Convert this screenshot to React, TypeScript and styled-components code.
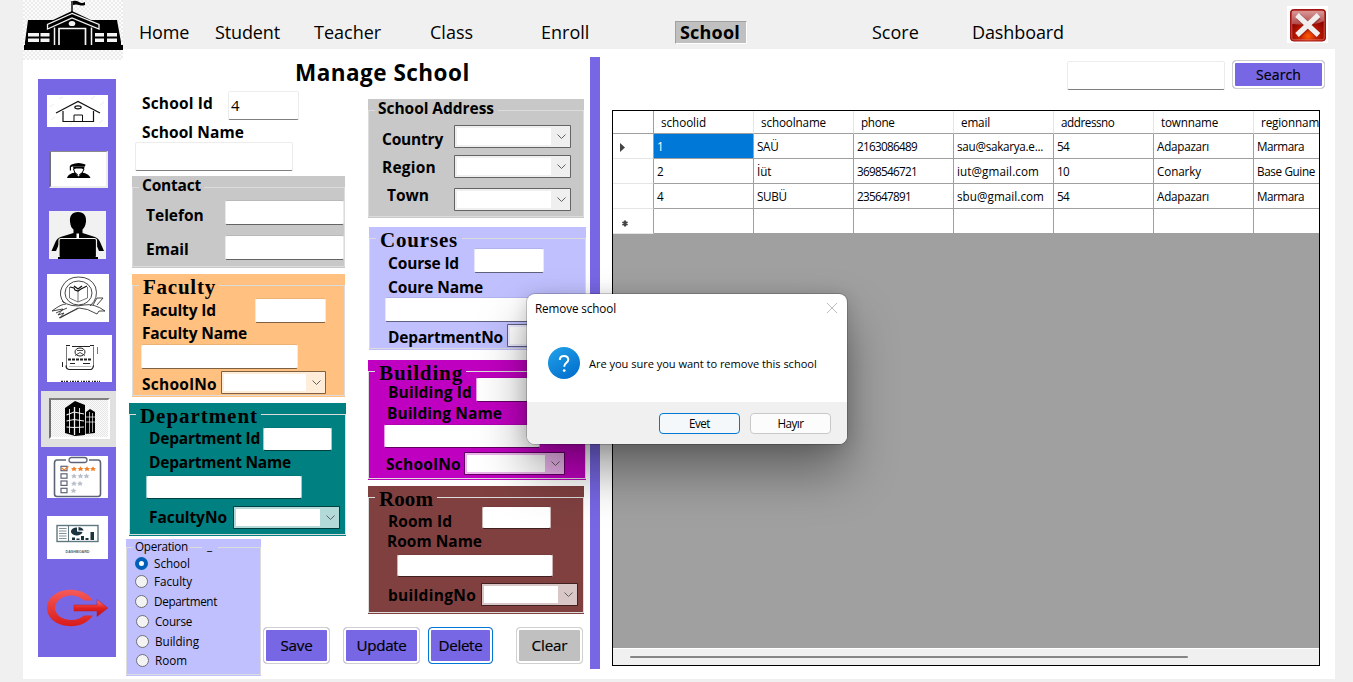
import React from 'react';
import styled, { createGlobalStyle, css } from 'styled-components';

const VIOLET = '#7767e4';

const GlobalStyle = createGlobalStyle`
  *, *::before { box-sizing: border-box; }
  body {
    margin: 0;
    background: #f0f0f0;
    color: #000;
    font-family: "Open Sans", "Noto Sans", sans-serif;
    overflow: hidden;
  }
`;

const Window = styled.div`
  position: relative;
  width: 1353px;
  height: 682px;
  padding: 0 18px 0 23px;
  background: #f0f0f0;
  overflow: hidden;
`;

/* ---------- top bar ---------- */

const TopBar = styled.header`
  display: flex;
  align-items: flex-start;
  height: 49px;
`;

const Logo = styled.div`
  position: relative;
  z-index: 1;
  flex: none;
  width: 100px;
  height: 60px;
  background: repeating-conic-gradient(#ececec 0 25%, #fcfcfc 0 50%) 0 0 / 4px 4px;
  svg { display: block; }
`;

const Nav = styled.nav`
  display: flex;
  margin-top: 20px;
`;

const NavItem = styled.a<{ $gap: number; $w: number; $ls?: number; $active?: boolean }>`
  flex: none;
  width: ${p => p.$w}px;
  height: 24px;
  margin-left: ${p => p.$gap}px;
  font-size: 18px;
  line-height: 25px;
  letter-spacing: ${p => p.$ls ?? 0}px;
  white-space: nowrap;
  ${p => p.$active && css`
    height: 23px;
    margin-top: 1px;
    padding-left: 4px;
    line-height: 21px;
    font-weight: 700;
    background: #c0c0c0;
    border: 1px solid #a0a0a0;
    border-right-color: #fff;
    border-bottom-color: #fff;
  `}
`;

const CloseBox = styled.button`
  flex: none;
  width: 41px;
  height: 37px;
  margin: 6px 7px 0 auto;
  padding: 0;
  border: 0;
  background: #fff;
  svg { display: block; }
`;

/* ---------- page ---------- */

const Page = styled.main`
  display: flex;
  align-items: flex-start;
  width: 1312px;
  height: 630px;
  background: #fff;
`;

const Sidebar = styled.aside`
  flex: none;
  width: 78px;
  height: 578px;
  margin: 30px 0 0 15px;
  display: flex;
  flex-direction: column;
  align-items: flex-start;
  background: ${VIOLET};
`;

const Tile = styled.div<{ $w: number; $h: number; $x: number; $gap: number; $bg?: string }>`
  flex: none;
  width: ${p => p.$w}px;
  height: ${p => p.$h}px;
  margin: ${p => p.$gap}px 0 0 ${p => p.$x}px;
  background: ${p => p.$bg ?? '#fff'};
  overflow: hidden;
  svg { display: block; }
`;

const SunkenTile = styled(Tile)`
  border: 2px solid;
  border-color: #8a8a8a #ececec #ececec #707070;
  border-top-width: 1px;
`;

const ActiveTile = styled.div`
  flex: none;
  width: 75px;
  height: 56px;
  margin: 9px 0 0 3px;
  padding: 7px 0 0 8px;
  background: #e0e0e0;
`;

const Pressed = styled.div`
  width: 61px;
  height: 41px;
  border: 2px solid;
  border-color: #808080 #fff #fff #707070;
  background: repeating-conic-gradient(#e6e6e6 0 25%, #fbfbfb 0 50%) 0 0 / 2px 2px;
  svg { display: block; }
`;

const Form = styled.section`
  flex: none;
  display: grid;
  grid-template-columns: 135px 85px 22px 222px;
  grid-template-rows: 42px 448px 76px 64px;
  padding-left: 10px;
  width: 474px;
  height: 630px;
`;

const Title = styled.h1`
  grid-column: 1 / -1;
  margin: 8px 0 0 169px;
  font-size: 22.5px;
  line-height: 32px;
  font-weight: 700;
  letter-spacing: 0.48px;
`;

const LeftColumn = styled.div`
  grid-area: 2 / 1 / 3 / 3;
  display: flex;
  flex-direction: column;
`;

const RightColumn = styled.div`
  grid-area: 2 / 4 / 4 / 5;
  display: flex;
  flex-direction: column;
  padding-top: 8px;
`;

const Row = styled.div<{ $h: number; $x?: number }>`
  position: relative;
  flex: none;
  display: flex;
  align-items: flex-start;
  height: ${p => p.$h}px;
  padding-left: ${p => p.$x ?? 0}px;
`;

const Label = styled.label<{ $w: number; $mt?: number; $ls?: number }>`
  flex: none;
  width: ${p => p.$w}px;
  margin-top: ${p => p.$mt ?? 0}px;
  font-size: 15.5px;
  line-height: 18px;
  font-weight: 700;
  letter-spacing: ${p => p.$ls ?? 0}px;
  white-space: nowrap;
`;

const Field = styled.div<{ $w: number; $h: number; $mt?: number; $pale?: boolean }>`
  flex: none;
  width: ${p => p.$w}px;
  height: ${p => p.$h}px;
  margin-top: ${p => p.$mt ?? 0}px;
  padding-left: 2px;
  background: #fff;
  background-clip: padding-box;
  border: 1px solid rgba(${p => (p.$pale ? '0,0,0,0.08' : '255,255,255,0.6')});
  border-top-color: rgba(0, 0, 0, 0.07);
  border-bottom-color: rgba(0, 0, 0, 0.5);
  border-radius: 2px;
  font-size: 15px;
  line-height: 27px;
`;

const ComboFrame = styled.div<{ $w: number; $mt?: number }>`
  flex: none;
  display: flex;
  align-items: center;
  width: ${p => p.$w}px;
  height: 23px;
  margin-top: ${p => p.$mt ?? 0}px;
  border: 1px solid rgba(0, 0, 0, 0.5);
  border-radius: 1px;
  background: rgba(255, 255, 255, 0.7);
  background-clip: padding-box;
`;

const ComboText = styled.div`
  flex: 1;
  height: 17px;
  margin-left: 2px;
  background: #fff;
`;

const ComboArrow = styled.svg`
  flex: none;
  width: 19px;
  height: 19px;
`;

function Combo({ w, mt }: { w: number; mt?: number }) {
  return (
    <ComboFrame $w={w} $mt={mt}>
      <ComboText />
      <ComboArrow viewBox="0 0 19 19">
        <path d="M6.500 7.500 L10.500 11.500 L14.500 7.500" fill="none" stroke="#606060" strokeWidth="1" />
      </ComboArrow>
    </ComboFrame>
  );
}

const Group = styled.div<{ $x: number; $gap: number; $w: number; $h: number; $bg: string }>`
  position: relative;
  flex: none;
  width: ${p => p.$w}px;
  height: ${p => p.$h}px;
  margin: ${p => p.$gap}px 0 0 ${p => p.$x}px;
  background: ${p => p.$bg};
  &::before {
    content: '';
    position: absolute;
    inset: 11px 0 1px 0;
    border: 1px solid #dcdcdc;
  }
`;

const GroupTitle = styled.div<{ $bg: string; $w: number; $serif?: boolean; $ls?: number }>`
  position: relative;
  height: 20px;
  width: ${p => p.$w}px;
  margin-left: 7px;
  padding-left: 3px;
  background: ${p => p.$bg};
  font-size: 15.5px;
  line-height: 19px;
  font-weight: 700;
  letter-spacing: ${p => p.$ls ?? 0}px;
  white-space: nowrap;
  ${p => p.$serif && css`
    height: 24px;
    padding-left: 4px;
    font-family: "Liberation Serif", serif;
    font-size: 21px;
    line-height: 26px;
  `}
`;

/* ---------- operation picker ---------- */

const Operation = styled.div`
  position: relative;
  grid-area: 3 / 1 / 5 / 2;
  width: 135px;
  height: 137px;
  background: #c0c0ff;
  font-size: 11.7px;
  line-height: 16px;
  &::before {
    content: '';
    position: absolute;
    inset: 8px 0 1px 0;
    border: 1px solid #dcdcdc;
  }
`;

const OperationTitle = styled.div`
  position: relative;
  display: flex;
  height: 16px;
  margin-left: 7px;
  line-height: 15px;
  span {
    padding-left: 2px;
    width: 57px;
    background: #c0c0ff;
    letter-spacing: -0.27px;
  }
  i {
    width: 16px;
    margin-left: 12px;
    padding-left: 5px;
    background: #c0c0ff;
    font-style: normal;
    line-height: 12px;
  }
`;

const Radio = styled.label<{ $gap: number; $x: number; $ls: number; $on?: boolean }>`
  position: relative;
  display: flex;
  align-items: center;
  height: 16px;
  line-height: 16px;
  margin: ${p => p.$gap}px 0 0 ${p => p.$x}px;
  letter-spacing: ${p => p.$ls}px;
  &::before {
    content: '';
    width: 13px;
    height: 13px;
    margin-right: 6px;
    border-radius: 50%;
    border: ${p => (p.$on ? '4px solid #005fb8' : '1px solid #6f6f78')};
    background: ${p => (p.$on ? '#fff' : '#f3f3f3')};
  }
`;

/* ---------- buttons ---------- */

const Buttons = styled.div`
  grid-area: 4 / 2 / 5 / 5;
  display: flex;
  align-items: flex-start;
  padding: 12px 0 0 2px;
`;

const Button = styled.button<{ $w: number; $gap?: number; $h?: number; $bg?: string; $focus?: boolean; $ls?: number; $fs?: number }>`
  flex: none;
  width: ${p => p.$w}px;
  height: ${p => p.$h ?? 37}px;
  margin: 0 0 0 ${p => p.$gap ?? 0}px;
  padding: 0 0 1px;
  border: 1px solid ${p => (p.$focus ? '#0078d4' : '#d0d0d0')};
  border-radius: 4px;
  background: ${p => p.$bg ?? VIOLET};
  box-shadow: inset 0 0 0 2px #fff;
  color: #000;
  font: 400 ${p => p.$fs ?? 15.2}px "Open Sans", sans-serif;
  letter-spacing: ${p => p.$ls ?? 0}px;
  -webkit-text-stroke: 0.2px #000;
`;

const Divider = styled.div`
  flex: none;
  width: 10px;
  height: 612px;
  margin-top: 8px;
  background: ${VIOLET};
`;

/* ---------- results ---------- */

const Results = styled.section`
  flex: none;
  width: 723px;
  padding: 11px 0 0 12px;
`;

const SearchBar = styled.div`
  display: flex;
  justify-content: flex-end;
  width: 713px;
  height: 50px;
`;

const Grid = styled.div`
  display: flex;
  flex-direction: column;
  width: 708px;
  height: 556px;
  border: 1px solid #000;
  background: #a0a0a0;
  overflow: hidden;
`;

const GridRow = styled.div<{ $head?: boolean }>`
  flex: none;
  display: flex;
  width: 741px;
  height: ${p => (p.$head ? 23 : 25)}px;
  font-size: 11.7px;
  line-height: ${p => (p.$head ? 23 : 25)}px;
  background: #fff;
`;

const RowHeader = styled.div<{ $head?: boolean }>`
  flex: none;
  width: 41px;
  border-right: 1px solid #a0a0a0;
  border-bottom: 1px solid ${p => (p.$head ? '#a0a0a0' : '#e5e5e5')};
  svg { display: block; }
`;

const Cell = styled.div<{ $ls?: number; $head?: boolean; $selected?: boolean }>`
  flex: none;
  width: 100px;
  padding-left: ${p => (p.$head ? 7 : 3)}px;
  border-right: 1px solid ${p => (p.$head ? '#e5e5e5' : '#a0a0a0')};
  border-bottom: 1px solid #a0a0a0;
  letter-spacing: ${p => p.$ls ?? 0}px;
  white-space: nowrap;
  ${p => p.$selected && css`
    background: #0078d7;
    color: #fff;
  `}
`;

const ScrollBar = styled.div`
  height: 17px;
  margin-top: auto;
  padding: 7px 0 0 17px;
  background: #f0f0f0;
  border-top: 1px solid #fff;
`;

const Thumb = styled.div`
  width: 558px;
  height: 2px;
  border-radius: 1px;
  background: #858585;
`;

type CellData = [string, number];
const HEAD: CellData[] = [['schoolid', -0.06], ['schoolname', -0.14], ['phone', -0.3], ['email', -0.16], ['addressno', -0.45], ['townname', -0.18], ['regionname', -0.14]];
const ROWS: CellData[][] = [
  [['1', 0], ['SAÜ', -0.3], ['2163086489', -0.68], ['sau@sakarya.e...', -0.27], ['54', -0.6], ['Adapazarı', -0.26], ['Marmara', -0.48]],
  [['2', 0], ['İüt', -0.1], ['3698546721', -0.68], ['iut@gmail.com', 0.09], ['10', -0.6], ['Conarky', -0.12], ['Base Guine', -0.36]],
  [['4', 0], ['SUBÜ', -0.3], ['235647891', -0.68], ['sbu@gmail.com', 0.04], ['54', -0.6], ['Adapazarı', -0.26], ['Marmara', -0.48]],
  [['', 0], ['', 0], ['', 0], ['', 0], ['', 0], ['', 0], ['', 0]],
];

/* ---------- dialog ---------- */

const Dialog = styled.div`
  position: absolute;
  left: 527px;
  top: 294px;
  z-index: 5;
  width: 320px;
  height: 150px;
  display: flex;
  flex-direction: column;
  border-radius: 8px;
  overflow: hidden;
  background: #fff;
  box-shadow: 0 0 0 1px rgba(0, 0, 0, 0.18), 0 28px 50px rgba(0, 0, 0, 0.38), 0 2px 18px rgba(0, 0, 0, 0.16);
  font-size: 11.7px;
`;

const DialogTitle = styled.div`
  display: flex;
  justify-content: space-between;
  height: 30px;
  padding: 0 9px 0 8px;
  line-height: 29px;
  letter-spacing: -0.11px;
  svg { margin-top: 8px; }
`;

const DialogBody = styled.div`
  display: flex;
  height: 78px;
  padding: 23px 0 0 21px;
  line-height: 34px;
  letter-spacing: -0.05px;
  font-size: 11.1px;
  white-space: nowrap;
  svg { flex: none; margin-right: 9px; }
`;

const DialogFooter = styled.div`
  display: flex;
  justify-content: flex-end;
  gap: 10px;
  height: 42px;
  padding: 11px 16px 0 0;
  background: #f0f0f0;
`;

const DialogButton = styled.button<{ $primary?: boolean }>`
  width: 81px;
  height: 21px;
  padding: 0;
  border: 1px solid ${p => (p.$primary ? '#0078d4' : '#c8c8c8')};
  border-radius: 4px;
  background: ${p => (p.$primary ? '#f5f8fb' : '#fcfcfc')};
  color: #000;
  font: 400 11.7px/19px "Open Sans", sans-serif;
  letter-spacing: -0.5px;
`;

/* ---------- drawings ---------- */

const SchoolLogo = () => (
  <svg width="100" height="60" viewBox="0 0 100 60">
    <path d="M1 50V45H2V42L5 20H30L49 11L68 20H94L98 42V45H100V50Z" fill="#000" />
    <path d="M49 12V1" stroke="#000" strokeWidth="1.4" />
    <path d="M50 1q3-1 6 1t6 0V5q-3 1-6 0t-6 0Z" fill="#000" />
    <path d="M49 13.5L24.5 24.5V29L49 18L76 29V24.5Z" fill="#000" stroke="#f4f4f4" strokeWidth="1.3" />
    <path d="M31.500 45V27.500M68.500 45V27.500" fill="none" stroke="#f4f4f4" strokeWidth="1.500" />
    <path d="M36 45V28.500H62.500V45" fill="none" stroke="#f4f4f4" strokeWidth="1.700" />
    <ellipse cx="49" cy="23.500" rx="3.300" ry="2.600" fill="#f4f4f4" />
    <g fill="#f4f4f4">
      <rect x="5" y="33" width="11" height="3.500" /><rect x="17.500" y="33" width="9" height="3.500" />
      <rect x="5" y="38.500" width="11" height="3.500" /><rect x="17.500" y="38.500" width="9" height="3.500" />
      <rect x="72" y="33" width="9" height="3.500" /><rect x="84" y="33" width="10" height="3.500" />
      <rect x="72" y="38.500" width="9" height="3.500" /><rect x="84" y="38.500" width="10" height="3.500" />
    </g>
  </svg>
);

const CloseIcon = () => (
  <svg width="41" height="37" viewBox="0 0 41 37">
    <defs>
      <radialGradient id="glow" cx="0.5" cy="0.85" r="0.6">
        <stop offset="0" stopColor="#ff5a00" /><stop offset="0.4" stopColor="#c42000" /><stop offset="1" stopColor="#8c0000" />
      </radialGradient>
      <linearGradient id="gloss" x1="0" y1="0" x2="0" y2="1">
        <stop offset="0" stopColor="#d99a9a" /><stop offset="1" stopColor="#b04545" />
      </linearGradient>
    </defs>
    <rect x="3.500" y="3.500" width="35" height="31.500" rx="3" fill="url(#glow)" stroke="#a31515" />
    <path d="M5 5H37V15Q28 20 5 18Z" fill="url(#gloss)" />
    <rect x="4.800" y="4.800" width="32.400" height="29" rx="2" fill="none" stroke="#e27a6a" strokeWidth="0.7" />
    <path d="M11.500 10.500L31.500 29M31.500 10.500L11.500 29" stroke="#6b1010" strokeWidth="6.500" opacity="0.35" />
    <path d="M10 9L31.500 29M31.500 9L10 29" stroke="#f1eeee" strokeWidth="5.200" />
  </svg>
);

const HouseIcon = () => (
  <svg width="61" height="32" viewBox="0 0 61 32">
    <g stroke="#e3e3e3" strokeWidth="0.7"><path d="M3 12l4-3M12 4l4-2M44 4l4-3M53 10l4-3M4 25l4-3M52 28l4-3M22 30l3-2" /></g>
    <g fill="none" stroke="#111" strokeWidth="1.200">
      <path d="M9 18L31 6.500L53 18" /><path d="M16 16V26.500H46.500V16" />
      <path d="M27 26V20H35.500V26" strokeWidth="1" /><ellipse cx="31" cy="12.300" rx="3.200" ry="1.500" />
    </g>
  </svg>
);

const GraduateIcon = () => (
  <svg width="55" height="34" viewBox="0 -1 55 34">
    <path d="M20.500 11.500Q27.500 8.500 34.500 11.500L34 13.500H21.500L20 14V17.500H18.800V13Z" fill="#000" />
    <path d="M22 13.500H33.500L33 16.500L30.500 15.500H25L22.500 16.500Z" fill="#000" />
    <path d="M22.500 16Q23 21 27.500 22Q32 21 33 16" fill="none" stroke="#000" strokeWidth="1" />
    <path d="M16 25Q17 20.500 24 19.500L27.500 23.500L31 19.500Q38 20.500 39.500 25Z" fill="#000" />
    <path d="M26 19.500L27.500 23.500L29 19.500Z" fill="#fff" />
  </svg>
);

const TeacherIcon = () => (
  <svg width="57" height="48" viewBox="0 0 57 48">
    <path d="M29 1C35 1 37.500 5 37 10.500C36.500 15 35 17 33.500 18.500V22L46 26Q50 27.500 51.500 32L55 40H50L47 33H10L7 40H2.500L6 32Q7.500 27.500 11.500 26L24.500 22V18.500C22.500 17 21.500 15 21 10.500C20.500 5 23 1 29 1Z" fill="#000" />
    <path d="M27.500 22.500H30V27.500H27.500Z" fill="#fff" />
    <rect x="10" y="27.500" width="37.500" height="19.500" rx="2" fill="#000" stroke="#f2f2f2" strokeWidth="1.200" />
    <path d="M9 46H49V48H9Z" fill="#000" />
  </svg>
);

const DiplomaIcon = () => (
  <svg width="62" height="48" viewBox="0 0 62 48" fill="none" stroke="#333" strokeWidth="0.9">
    <path d="M17 29Q11 21 15 13Q20 3 31.500 3Q44 3 48.500 13Q52 24 43 32" />
    <ellipse cx="31.500" cy="19" rx="13.500" ry="12" />
    <path d="M22.500 13V24L31 28L40.500 24V13M31 16.500V28" stroke="#666" />
    <path d="M23 13l4 1 1 2 3 1 3-2 2-1 4-2M27 12l4 3 4-3" stroke="#111" strokeWidth="1.200" />
    <path d="M15 27Q24 34 37 31Q47 29 58 37L52 37L50 40Q40 34 32 34Q24 38 13 44L17 39L11 41L16 35L5 37Q14 30 19 30" />
    <path d="M46 31L50 24H56L50 31M12 44L31 34M20 34L9 39" />
  </svg>
);

const CertificateIcon = () => (
  <svg width="65" height="47" viewBox="0 0 65 47" fill="none" stroke="#222">
    <path d="M19.500 32V11.500M46.500 32V11.500" stroke="#777" /><path d="M19 10.500H23M25 11.500H43M43 10.500H47" strokeWidth="1.100" />
    <path d="M19 30.500Q19 34 22 34.500H44Q46 34 46.500 30.500" strokeWidth="1.200" />
    <ellipse cx="33" cy="17" rx="5" ry="4" strokeWidth="1" /><path d="M28 20.500L33 17.500L38 20.500M30 15.500H36" strokeWidth="0.8" />
    <path d="M21 24.500H45" strokeWidth="2" strokeDasharray="3 1" /><path d="M23 28.500H28M36 28.500H43" strokeWidth="1" />
    <path d="M22 31.500H44" stroke="#bbb" /><path d="M15.500 27V32" strokeWidth="1" /><path d="M50.500 12V19" stroke="#777" strokeWidth="1" />
    <path d="M14 46.500H53" strokeWidth="1.300" strokeDasharray="2 1 1 1 2 2 1 1" />
  </svg>
);

const BuildingIcon = () => (
  <svg width="57" height="37" viewBox="0 0 57 37">
    <path d="M14 8L24 1L34 5V35L24 36L14 33Z" fill="#000" />
    <path d="M35 12L39 9L44 12V33L34 34Z" fill="#000" />
    <g stroke="#f2f2f2" fill="none">
      <path d="M23.500 7V35" strokeWidth="1.300" /><path d="M18.500 9V33M28.500 8V33" strokeWidth="0.9" />
      <path d="M15.500 15L23 12L33 14M15.500 21L23 19.500L33 21M15.500 27L23 27.500L33 27" strokeWidth="1.200" />
      <path d="M34.500 12V34M38.500 12V33M41.500 13V32" strokeWidth="0.7" /><path d="M35 17H44M35 22H44" strokeWidth="0.7" />
    </g>
  </svg>
);

const ChecklistIcon = () => {
  const star = (x: number, y: number, fill: string) => (
    <path key={`${x}-${y}`} transform={`translate(${x} ${y})`} d="M0 -2.600L1 -0.900L3 -0.600L1.500 0.600L2 2.400L0 1.500L-2 2.400L-1.500 0.600L-3 -0.600L-1 -0.900Z" fill={fill} />
  );
  return (
    <svg width="61" height="42" viewBox="0 0 61 42">
      <path d="M19 4H10Q7.500 4 7.500 7V38Q7.500 40.500 10 40.500H51Q53.500 40.500 53.500 38V7Q53.500 4 51 4H42" fill="none" stroke="#5d6478" strokeWidth="1.600" />
      <rect x="22" y="1.500" width="18" height="5" rx="2.500" fill="#fff" stroke="#5d6478" strokeWidth="1.300" />
      {[12.5, 20, 27.2, 34.5].map(y => <rect key={y} x="14" y={y - 2.2} width="6" height="4.400" fill="none" stroke="#5d6478" strokeWidth="1.200" />)}
      <path d="M15 12L17 14L21.500 10.500" fill="none" stroke="#f08026" strokeWidth="1.200" />
      {[27, 33.5, 40, 46].map(x => star(x, 12.8, '#f08026'))}
      {[27, 33.5, 39.5].map(x => star(x, 20, '#b9bfcb'))}
      {[27, 33].map(x => star(x, 27.5, '#b9bfcb'))}
      {star(26.5, 34.7, '#b9bfcb')}
    </svg>
  );
};

const TinyText = styled.text`
  font: 700 3.2px "Liberation Sans", sans-serif;
`;

const DashboardIcon = () => (
  <svg width="61" height="43" viewBox="0 0 61 43">
    <rect x="10" y="9.500" width="41" height="16" fill="none" stroke="#5f7780" strokeWidth="1.400" />
    <path d="M21.500 9.500V25.500" stroke="#5f7780" />
    <path d="M12 12.500H19.500M12 15H19.500M12 17.500H19.500M12 20H19.500M12 22.500H19.500" stroke="#74868d" strokeWidth="0.9" />
    <path d="M30 11.500A5.800 4 0 1 0 35.500 16L30 15.500Z" fill="#1c3440" />
    <path d="M31.500 11Q36 11.500 36.500 14.500H31.500Z" fill="#1c3440" />
    <path d="M25 24V21.500H28V24ZM29.500 24V22.500H32.500V24ZM34 24V20H37V24ZM38.500 24V22H41.500V24ZM43.500 24V16H47V24Z" fill="#1c3440" />
    <TinyText x="30.500" y="37" textAnchor="middle" textLength="24" lengthAdjust="spacingAndGlyphs" fill="#50666e">DASHBOARD</TinyText>
  </svg>
);

const ExitIcon = () => (
  <svg width="61" height="38" viewBox="0 0 61 38">
    <defs>
      <linearGradient id="ring" x1="0" y1="0" x2="0" y2="1"><stop offset="0" stopColor="#f65a58" /><stop offset="1" stopColor="#d81b1b" /></linearGradient>
      <linearGradient id="arrow" x1="0" y1="0" x2="0" y2="1"><stop offset="0" stopColor="#f77" /><stop offset="0.5" stopColor="#e32222" /><stop offset="1" stopColor="#b90d0d" /></linearGradient>
    </defs>
    <path d="M46 11.500C41 4.500 33 0.800 24 0.800C10.500 0.800 0 8.500 0 19S10.500 37.200 24 37.200C33 37.200 41 33.500 46 26.500H37C34 29 29.500 31 24.500 31C15 31 8 25.500 8 19S15 6.500 24.500 6.500C29.500 6.500 34 9 37 11.500Z" fill="url(#ring)" />
    <path d="M27 16H50V10.500L60.800 19L50 27.500V22H27Z" fill="url(#arrow)" stroke="#c01818" strokeWidth="0.5" />
  </svg>
);

const QuestionIcon = () => (
  <svg width="32" height="32" viewBox="0 0 32 32">
    <defs><linearGradient id="ask" x1="0" y1="0" x2="0.6" y2="1"><stop offset="0" stopColor="#22a3ea" /><stop offset="1" stopColor="#0472cf" /></linearGradient></defs>
    <circle cx="16" cy="16" r="16" fill="url(#ask)" />
    <path d="M11.800 13C11.800 10.500 13.400 9 16 9S20.300 10.500 20.300 12.700C20.300 15.800 16.200 16 16.200 19.700" fill="none" stroke="#fff" strokeWidth="2" />
    <circle cx="16.200" cy="23.600" r="1.400" fill="#fff" />
  </svg>
);

export default function App() {
  return (
    <>
      <GlobalStyle />
      <Window>
        <TopBar>
          <Logo><SchoolLogo /></Logo>
          <Nav>
            <NavItem $gap={16} $w={50} $ls={-0.2}>Home</NavItem>
            <NavItem $gap={26} $w={65} $ls={-0.13}>Student</NavItem>
            <NavItem $gap={34} $w={67}>Teacher</NavItem>
            <NavItem $gap={49} $w={43}>Class</NavItem>
            <NavItem $gap={68} $w={48}>Enroll</NavItem>
            <NavItem $gap={86} $w={72} $ls={0.2} $active>School</NavItem>
            <NavItem $gap={125} $w={47}>Score</NavItem>
            <NavItem $gap={53} $w={92} $ls={-0.1}>Dashboard</NavItem>
          </Nav>
          <CloseBox><CloseIcon /></CloseBox>
        </TopBar>

        <Page>
          <Sidebar>
            <Tile $w={61} $h={32} $x={9} $gap={16}><HouseIcon /></Tile>
            <SunkenTile $w={59} $h={37} $x={11} $gap={24}><GraduateIcon /></SunkenTile>
            <Tile $w={57} $h={48} $x={11} $gap={23} $bg="#f1f1f1"><TeacherIcon /></Tile>
            <Tile $w={62} $h={48} $x={9} $gap={15}><DiplomaIcon /></Tile>
            <Tile $w={65} $h={47} $x={9} $gap={13}><CertificateIcon /></Tile>
            <ActiveTile><Pressed><BuildingIcon /></Pressed></ActiveTile>
            <Tile $w={61} $h={42} $x={9} $gap={9}><ChecklistIcon /></Tile>
            <Tile $w={61} $h={43} $x={9} $gap={18}><DashboardIcon /></Tile>
            <Tile $w={61} $h={38} $x={9} $gap={30} $bg="transparent"><ExitIcon /></Tile>
          </Sidebar>

          <Form>
            <Title>Manage School</Title>

            <LeftColumn>
              <Row $h={31} $x={16}>
                <Label $w={86} $mt={3} $ls={0.16}>School Id</Label>
                <Field $w={71} $h={29} $pale>4</Field>
              </Row>
              <Row $h={20} $x={16}><Label $w={110} $mt={1} $ls={0.09}>School Name</Label></Row>
              <Row $h={29} $x={9}><Field $w={158} $h={29} $pale /></Row>

              <Group $x={6} $gap={5} $w={213} $h={92} $bg="#c8c8c8">
                <GroupTitle $bg="#c8c8c8" $w={65} $ls={-0.21}>Contact</GroupTitle>
                <Row $h={34} $x={14}>
                  <Label $w={79} $mt={10}>Telefon</Label>
                  <Field $w={119} $h={25} $mt={4} />
                </Row>
                <Row $h={34} $x={14}>
                  <Label $w={79} $mt={10}>Email</Label>
                  <Field $w={119} $h={25} $mt={5} />
                </Row>
              </Group>

              <Group $x={6} $gap={6} $w={213} $h={123} $bg="#ffc080">
                <GroupTitle $bg="#ffc080" $w={80} $serif $ls={0.76}>Faculty</GroupTitle>
                <Row $h={26} $x={10}>
                  <Label $w={113} $mt={3} $ls={-0.13}>Faculty Id</Label>
                  <Field $w={71} $h={25} />
                </Row>
                <Row $h={20} $x={10}><Label $w={110} $ls={-0.14}>Faculty Name</Label></Row>
                <Row $h={27} $x={9}><Field $w={157} $h={25} /></Row>
                <Row $h={24} $x={10}>
                  <Label $w={79} $mt={4} $ls={0.27}>SchoolNo</Label>
                  <Combo w={105} />
                </Row>
              </Group>

              <Group $x={3} $gap={6} $w={217} $h={133} $bg="#008080">
                <GroupTitle $bg="#008080" $w={125} $serif $ls={0.95}>Department</GroupTitle>
                <Row $h={26} $x={20}>
                  <Label $w={114} $mt={2} $ls={-0.22}>Department Id</Label>
                  <Field $w={69} $h={24} />
                </Row>
                <Row $h={23} $x={20}><Label $w={150} $ls={-0.22}>Department Name</Label></Row>
                <Row $h={30} $x={17}><Field $w={156} $h={24} $mt={-1} /></Row>
                <Row $h={24} $x={20}>
                  <Label $w={84} $mt={2} $ls={-0.06}>FacultyNo</Label>
                  <Combo w={107} />
                </Row>
              </Group>
            </LeftColumn>

            <RightColumn>
              <Group $x={0} $gap={0} $w={216} $h={119} $bg="#c8c8c8">
                <GroupTitle $bg="#c8c8c8" $w={123} $ls={-0.04}>School Address</GroupTitle>
                <Row $h={30} $x={14}>
                  <Label $w={72} $mt={11} $ls={-0.2}>Country</Label>
                  <Combo w={117} mt={6} />
                </Row>
                <Row $h={33} $x={14}>
                  <Label $w={72} $mt={9} $ls={0.22}>Region</Label>
                  <Combo w={117} mt={6} />
                </Row>
                <Row $h={30} $x={19}>
                  <Label $w={67} $mt={4}>Town</Label>
                  <Combo w={117} mt={6} />
                </Row>
              </Group>

              <Group $x={1} $gap={9} $w={217} $h={123} $bg="#c0c0ff">
                <GroupTitle $bg="#c0c0ff" $w={86} $serif $ls={0.81}>Courses</GroupTitle>
                <Row $h={26} $x={19}>
                  <Label $w={86} $mt={3} $ls={-0.17}>Course Id</Label>
                  <Field $w={70} $h={25} $mt={-3} />
                </Row>
                <Row $h={20} $x={19}><Label $w={110} $mt={1} $ls={-0.12}>Coure Name</Label></Row>
                <Row $h={27} $x={16}><Field $w={157} $h={25} /></Row>
                <Row $h={24} $x={19}>
                  <Label $w={119} $mt={4} $ls={-0.17}>DepartmentNo</Label>
                  <Combo w={70} />
                </Row>
              </Group>

              <Group $x={0} $gap={10} $w={218} $h={120} $bg="#c000c0">
                <GroupTitle $bg="#c000c0" $w={91} $serif $ls={0.87}>Building</GroupTitle>
                <Row $h={20} $x={20}>
                  <Label $w={88} $mt={-1} $ls={0.14}>Building Id</Label>
                  <Field $w={70} $h={25} $mt={-7} />
                </Row>
                <Row $h={20} $x={19}><Label $w={120} $ls={0.08}>Building Name</Label></Row>
                <Row $h={28} $x={16}><Field $w={156} $h={24} /></Row>
                <Row $h={24} $x={18}>
                  <Label $w={78} $mt={3} $ls={0.27}>SchoolNo</Label>
                  <Combo w={101} />
                </Row>
              </Group>

              <Group $x={0} $gap={6} $w={216} $h={128} $bg="#804040">
                <GroupTitle $bg="#804040" $w={62} $serif $ls={0.09}>Room</GroupTitle>
                <Row $h={22} $x={20}>
                  <Label $w={94} $mt={2} $ls={0.06}>Room Id</Label>
                  <Field $w={69} $h={23} $mt={-4} />
                </Row>
                <Row $h={23} $x={19}><Label $w={110}>Room Name</Label></Row>
                <Row $h={28} $x={29}><Field $w={156} $h={23} $mt={-1} /></Row>
                <Row $h={24} $x={20}>
                  <Label $w={93} $mt={3} $ls={0.29}>buildingNo</Label>
                  <Combo w={97} />
                </Row>
              </Group>
            </RightColumn>

            <Operation>
              <OperationTitle><span>Operation</span><i>_</i></OperationTitle>
              <Radio $gap={0} $x={9} $ls={-0.03} $on>School</Radio>
              <Radio $gap={2} $x={9} $ls={-0.04}>Faculty</Radio>
              <Radio $gap={4} $x={9} $ls={-0.33}>Department</Radio>
              <Radio $gap={4} $x={10} $ls={-0.24}>Course</Radio>
              <Radio $gap={4} $x={10} $ls={-0.03}>Building</Radio>
              <Radio $gap={3} $x={10} $ls={-0.02}>Room</Radio>
            </Operation>

            <Buttons>
              <Button $w={67} $ls={-0.2}>Save</Button>
              <Button $w={77} $gap={13} $ls={-0.35}>Update</Button>
              <Button $w={65} $gap={8} $ls={-0.35} $focus>Delete</Button>
              <Button $w={67} $gap={23} $ls={-0.15} $bg="#c0c0c0">Clear</Button>
            </Buttons>
          </Form>

          <Divider />

          <Results>
            <SearchBar>
              <Field $w={158} $h={29} $mt={1} $pale />
              <Button $w={93} $gap={7} $h={29} $fs={14} $ls={0.15}>Search</Button>
            </SearchBar>
            <Grid>
              <GridRow $head>
                <RowHeader $head />
                {HEAD.map(([text, ls]) => <Cell key={text} $head $ls={ls}>{text}</Cell>)}
              </GridRow>
              {ROWS.map((row, r) => (
                <GridRow key={r}>
                  <RowHeader>
                    <svg width="40" height="24" viewBox="0 0 40 24">
                      {r === 0 && <path d="M7 9V18L12 13.500Z" fill="#444" />}
                      {r === 3 && <path d="M12 11.500V17.500M9.500 13L14.500 16M14.500 13L9.500 16" stroke="#444" strokeWidth="2" />}
                    </svg>
                  </RowHeader>
                  {row.map(([text, ls], c) => <Cell key={c} $ls={ls} $selected={r === 0 && c === 0}>{text}</Cell>)}
                </GridRow>
              ))}
              <ScrollBar><Thumb /></ScrollBar>
            </Grid>
          </Results>
        </Page>

        <Dialog role="dialog">
          <DialogTitle>
            Remove school
            <svg width="12" height="12" viewBox="0 0 12 12"><path d="M1 1L11 11M11 1L1 11" stroke="#bdbdbd" strokeWidth="1" /></svg>
          </DialogTitle>
          <DialogBody>
            <QuestionIcon />
            Are you sure you want to remove this school
          </DialogBody>
          <DialogFooter>
            <DialogButton $primary>Evet</DialogButton>
            <DialogButton>Hayır</DialogButton>
          </DialogFooter>
        </Dialog>
      </Window>
    </>
  );
}
